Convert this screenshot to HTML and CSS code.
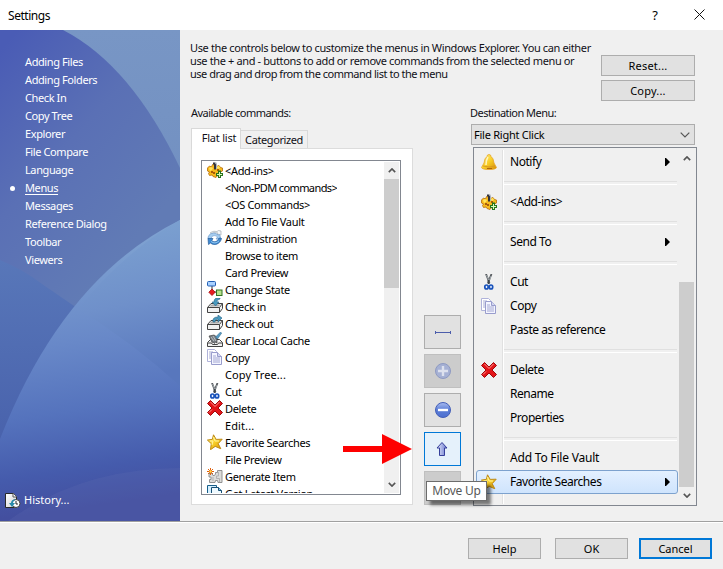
FILE: index.html
```html
<!DOCTYPE html>
<html lang="en">
<head>
<meta charset="utf-8">
<title>Settings</title>
<link rel="stylesheet" href="styles.css">
</head>
<body>
<svg class="defs" width="0" height="0">
  <defs>
    <linearGradient id="gold" x1="0" y1="0" x2="1" y2="1"><stop offset="0" stop-color="#fff18a"/><stop offset=".5" stop-color="#f8cf28"/><stop offset="1" stop-color="#d58a05"/></linearGradient>
    <linearGradient id="ball" x1="0" y1="0" x2="0" y2="1"><stop offset="0" stop-color="#a9bcf0"/><stop offset=".5" stop-color="#5b7dd6"/><stop offset="1" stop-color="#4d6fd0"/></linearGradient>
    <linearGradient id="arrow" x1="0" y1="0" x2="1" y2="0"><stop offset="0" stop-color="#e4e8fa"/><stop offset="1" stop-color="#6677cf"/></linearGradient>
    <linearGradient id="page" x1="0" y1="0" x2="1" y2="1"><stop offset="0" stop-color="#fff"/><stop offset="1" stop-color="#d2d2d2"/></linearGradient>
    <symbol id="addins" viewBox="0 0 16 16">
      <path d="M.5 6l2-2 2 1 1-2.500 3 .5 1 1.500 2.500-1 1.500 2 2 .5v3l-2 1-.5 3-3 1-1 1.500-3-1-1-1.500-2.500.5-1-2 1-1.500-2-1z" fill="#f6b91d" stroke="#b66d08" stroke-width=".8"/>
      <path d="M2 6l2-1 2 1-1 2-2 1zM9 5l3-1 1 2-2 1z" fill="#ffe55e"/>
      <path d="M4 9h2v1h2v2H6v-1H4zM10 7h2v2h-2z" fill="#a85c0a"/>
      <path d="M6 .5h2l1 2v5H7v-5H6z" fill="#33333b"/><path d="M8 0h1l1 2v5H9V2z" fill="#adb3bc"/>
      <path d="M11 8.500h3v2.500h2v3h-2v2h-3v-2H9v-3h2z" fill="#28721c"/><path d="M12 10h1v2h2v1h-2v2h-1v-2h-2v-1h2z" fill="#d8fbb9"/>
    </symbol>
    <symbol id="admin" viewBox="0 0 16 16">
      <path d="M3.500 2.500Q7 .5 10 1.500l1.500-1 2.500.5v4l-4-.5 1-1.500Q7 1.500 4 4z" fill="#f3f5f7" stroke="#a4adb5" stroke-width=".7"/>
      <path d="M1 9C.5 3 8 1.500 11 5l1.500-.5L14 9H9l1.500-2C8 4.500 4.500 5.500 4 9z" fill="#a5cdf0" stroke="#6d9bcd" stroke-width=".7"/>
      <path d="M1 8.500h5L4.800 10.500c2.500 2.500 6 1 7.200-2.500l2.500.5c-1.500 6-7.500 7.500-11 4.500l-2 1.500z" fill="#3f8ad3" stroke="#275d9b" stroke-width=".7"/>
      <path d="M4 11.500q4 3 8 -.5" fill="none" stroke="#a5d5f6" stroke-width=".8"/>
    </symbol>
    <symbol id="state" viewBox="0 0 16 16">
      <path d="M5 5v6h6" fill="none" stroke="#333"/>
      <rect x=".5" y=".5" width="8" height="4.500" rx="1" fill="#a9d1ff" stroke="#235fb4"/>
      <path d="M5 8l3.200 3.200L5 14.500l-3.200-3.300z" fill="#e51d20" stroke="#a90e10" stroke-width=".8"/>
      <rect x="9.500" y="9" width="5.500" height="5.500" fill="#b5e28b" stroke="#347425"/>
    </symbol>
    <symbol id="tray" viewBox="0 0 16 16">
      <path d="M.5 9.500L4 5.500h11.500v5l-3 4H.5z" fill="#f1f1f1" stroke="#444" stroke-width="1"/>
      <path d="M.5 9.500h12v5M12.500 9.500l3-4" fill="none" stroke="#444"/><path d="M4.500 6.500h9l-2 2h-9z" fill="#aaa"/>
    </symbol>
    <symbol id="checkin" viewBox="0 0 16 16"><use href="#tray"/>
      <path d="M13 0Q7-1 7 4H5l3.500 4L12 4h-2Q9 2 13 1z" fill="#4a9abe" stroke="#245f83" stroke-width=".6"/>
    </symbol>
    <symbol id="checkout" viewBox="0 0 16 16"><use href="#tray"/>
      <path d="M6 7Q5 2 11 2V0l4 3-4 4V4Q8 4 8 7z" fill="#4a9abe" stroke="#245f83" stroke-width=".6"/>
    </symbol>
    <symbol id="cache" viewBox="0 0 16 16"><path d="M.5 10.500l3-3h9l3 3v4H.5z" fill="#f1f1f1" stroke="#444"/>
      <path d="M1 11h3.500l1 1.500h5l1-1.500H15" fill="none" stroke="#444"/>
      <path d="M2 4l5-1 3 2v6l-1.500-1-1 1.500L6 10l-1 .5L4 8z" fill="#777d83" stroke="#333" stroke-width=".6"/><path d="M4 5l3 4M6 4l3 5" stroke="#d5d9dd" stroke-width=".7"/>
      <path d="M8.500 5l5-5 1.200 1-4.200 6z" fill="#599dc5" stroke="#286288" stroke-width=".5"/>
    </symbol>
    <symbol id="copy" viewBox="0 0 16 16">
      <path d="M.5 .5h7l2 2v10h-9z" fill="#fff" stroke="#b0b3da"/>
      <path d="M2 3h4M2 5h4M2 7h4M2 9h4" stroke="#a8acd4"/>
      <path d="M4.500 3.500h6l4 4v8h-10z" fill="#f4f5ff" stroke="#999dcd"/><path d="M10.500 3.500v4h4" fill="#d4d7f0" stroke="#999dcd"/>
      <path d="M6 7h3M6 9h7M6 11h7M6 13h7" stroke="#a4a8d3"/>
    </symbol>
    <symbol id="cut" viewBox="0 0 16 16">
      <path d="M5 0l3.500 9M10.500 0L7 9" stroke="#55595d" stroke-width="1.800"/><path d="M5.500 1l2.500 6M10 2L7.500 9" stroke="#bbc4ca" stroke-width=".7"/>
      <path d="M7.700 6v4" stroke="#3d454c" stroke-width="2"/>
      <ellipse cx="5.500" cy="13" rx="1.700" ry="2" fill="#eef4ff" stroke="#1852bb" stroke-width="1.700"/><ellipse cx="10" cy="13" rx="1.700" ry="2" fill="#eef4ff" stroke="#1852bb" stroke-width="1.700"/>
    </symbol>
    <symbol id="delete" viewBox="0 0 16 16">
      <path d="M3.500 .5L8 5l4.500-4.500 3 3L11 8l4.500 4.500-3 3L8 11l-4.500 4.500-3-3L5 8 .5 3.500z" fill="#e31519" stroke="#a0080b"/>
      <path d="M3.500 2L8 6.500 12.500 2M2 12.500l3-3" fill="none" stroke="#ff9692" stroke-width="1"/>
    </symbol>
    <symbol id="star" viewBox="0 0 16 16">
      <path d="M6.500 .8l2.700 4.600 6-.2-4 4.500 2.600 5-5.600-2.300-4.700 3.300.8-6-3.900-3.600 5-.8z" fill="url(#gold)" stroke="#bd8916"/>
      <path d="M6.500 3l1.500 4h4M3 7h3l-1 4" fill="none" stroke="#fff59e"/>
    </symbol>
    <symbol id="generate" viewBox="0 0 16 16">
      <path d="M2 5.500h3l1 2h1.500l1-1.500V4.500h2v-2H15v12h-4l-.5-2h-2l-.5 2H2.500v-3H4V9H2z" fill="#dcdcda" stroke="#888" stroke-width=".9"/>
      <path d="M11.500 4v4h-2v2.500h3V14M6 9v4" fill="none" stroke="#b1b1b1"/>
      <path d="M3.500 0v7M0 3.500h7M1 1l5 5M6 1L1 6" stroke="#e0600f" stroke-width="1"/><circle cx="3.500" cy="3.500" r="1.200" fill="#ffde4a"/>
    </symbol>
    <symbol id="latest" viewBox="0 0 16 16">
      <path d="M.5 .5h9v12h-9z" fill="#d5efff" stroke="#175e89"/><path d="M4.500 2.500h7l3 3v10h-10z" fill="#eef9ff" stroke="#164f75"/><path d="M11.500 2.500v3h3" fill="#81c5e7" stroke="#164f75"/>
    </symbol>
    <symbol id="bell" viewBox="0 0 16 16">
      <path d="M6 2.500Q6 .5 8 .5t2 2Q12.500 4 13 9l2.500 4.500Q15 15.500 8 15.500T.5 13.500L3 9Q3.500 4 6 2.500z" fill="url(#gold)" stroke="#e7a62c" stroke-width=".8"/>
      <path d="M5 11Q5 6 7 3" fill="none" stroke="#fff5bd" stroke-width="1.500"/><path d="M2 12q6 2 12 0" fill="none" stroke="#d99a22"/><path d="M6 14h5v1H6z" fill="#ad650d"/>
    </symbol>
    <symbol id="history" viewBox="0 0 16 16">
      <path d="M.5 .5h8l3 3.500v10.500H.5z" fill="url(#page)" stroke="#292929"/><path d="M8 .5V4h3.500" fill="#fff" stroke="#555"/>
      <circle cx="11" cy="10.500" r="4" fill="#fff" stroke="#444"/><path d="M11 8v3h2" fill="none" stroke="#222"/>
      <path d="M10 6Q6 7 6 10H4l3 4 3-4H8q0-2 2-3z" fill="#2a8baa"/>
    </symbol>
    <symbol id="up" viewBox="0 0 10 6"><path d="M1 5l4-4 4 4" fill="none" stroke="#555" stroke-width="2"/></symbol>
    <symbol id="down" viewBox="0 0 10 6"><path d="M1 1l4 4 4-4" fill="none" stroke="#555" stroke-width="2"/></symbol>
    <symbol id="sub" viewBox="0 0 5 8"><path d="M0 0h1l4 4-4 4H0z"/></symbol>
  </defs>
</svg>

<div class="window">
  <header class="titlebar">
    <span class="title">Settings</span>
    <span class="help-mark">?</span>
    <svg class="close" viewBox="0 0 11 11"><path d="M.5 .5l10 10M10.500 .5l-10 10" stroke="#111" fill="none"/></svg>
  </header>

  <main class="body">
    <nav class="sidebar">
      <svg class="backdrop" viewBox="0 0 180 491" preserveAspectRatio="none">
        <defs>
          <linearGradient id="s1" x1="0" y1="0" x2="0" y2="1"><stop offset="0" stop-color="#7896c5"/><stop offset="1" stop-color="#6684b9"/></linearGradient>
          <linearGradient id="s2" gradientUnits="userSpaceOnUse" x1="0" y1="20" x2="170" y2="170"><stop offset="0" stop-color="#4a5cb5"/><stop offset=".5" stop-color="#5a70b5"/><stop offset="1" stop-color="#617bb5"/></linearGradient>
          <linearGradient id="s3" gradientUnits="userSpaceOnUse" x1="0" y1="230" x2="0" y2="410"><stop offset="0" stop-color="#5877b9"/><stop offset="1" stop-color="#4962ac"/></linearGradient>
          <linearGradient id="s4" gradientUnits="userSpaceOnUse" x1="100" y1="220" x2="135" y2="470"><stop offset="0" stop-color="#7da0d0"/><stop offset=".35" stop-color="#6888c8"/><stop offset=".62" stop-color="#5573bd"/><stop offset=".85" stop-color="#455bac"/><stop offset="1" stop-color="#434f9f"/></linearGradient>
          <linearGradient id="s5" gradientUnits="userSpaceOnUse" x1="120" y1="200" x2="150" y2="345"><stop offset="0" stop-color="#7ba0d0"/><stop offset=".5" stop-color="#6f90ca"/><stop offset="1" stop-color="#5877bd"/></linearGradient>
        </defs>
        <rect width="180" height="491" fill="url(#s1)"/>
        <path d="M0 0H63Q131 35 180 138V491H0z" fill="url(#s2)"/>
        <path d="M0 230Q24 240 42 254L80 280V491H0z" fill="url(#s3)"/>
        <path d="M180 190Q63 248 0 409V491H180z" fill="url(#s4)"/>
        <path d="M180 190Q124 222 78 279Q132 312 180 356z" fill="url(#s5)"/>
        <path d="M8 491Q82 438 180 438V491z" fill="#6977b9" opacity=".18"/>
      </svg>
      <ul class="nav">
        <li>Adding Files</li><li>Adding Folders</li><li>Check In</li><li>Copy Tree</li><li>Explorer</li><li>File Compare</li><li>Language</li><li class="current"><span>Menus</span></li><li>Messages</li><li>Reference Dialog</li><li>Toolbar</li><li>Viewers</li>
      </ul>
      <div class="history"><svg class="icon"><use href="#history"/></svg><span>History...</span></div>
    </nav>

    <section class="content">
      <div class="intro">
        <p>Use the controls below to customize the menus in Windows Explorer. You can either<br><span class="l2">use the + and - buttons to add or remove commands from the selected menu or</span><br><span class="l3">use drag and drop from the command list to the menu</span></p>
        <div class="intro-buttons"><button>Reset...</button><button>Copy...</button></div>
      </div>

      <div class="columns">
        <div class="available">
          <div class="label">Available commands:</div>
          <div class="tabs"><div class="tab active">Flat list</div><div class="tab">Categorized</div></div>
          <div class="panel">
            <div class="listbox">
              <ul class="commands">
                <li><svg class="icon"><use href="#addins"/></svg><span class="b">&lt;Add-ins&gt;</span></li>
                <li><i class="icon"></i><span class="b wide">&lt;Non-PDM commands&gt;</span></li>
                <li><i class="icon"></i><span class="b">&lt;OS Commands&gt;</span></li>
                <li><i class="icon"></i>Add To File Vault</li>
                <li><svg class="icon"><use href="#admin"/></svg>Administration</li>
                <li><i class="icon"></i>Browse to item</li>
                <li><i class="icon"></i>Card Preview</li>
                <li><svg class="icon"><use href="#state"/></svg>Change State</li>
                <li><svg class="icon"><use href="#checkin"/></svg>Check in</li>
                <li><svg class="icon"><use href="#checkout"/></svg>Check out</li>
                <li><svg class="icon"><use href="#cache"/></svg>Clear Local Cache</li>
                <li><svg class="icon"><use href="#copy"/></svg>Copy</li>
                <li><i class="icon"></i><span class="dots">Copy Tree...</span></li>
                <li><svg class="icon"><use href="#cut"/></svg>Cut</li>
                <li><svg class="icon"><use href="#delete"/></svg>Delete</li>
                <li><i class="icon"></i><span class="dots">Edit...</span></li>
                <li><svg class="icon"><use href="#star"/></svg>Favorite Searches</li>
                <li><i class="icon"></i>File Preview</li>
                <li><svg class="icon"><use href="#generate"/></svg>Generate Item</li>
                <li><svg class="icon"><use href="#latest"/></svg>Get Latest Version</li>
              </ul>
              <div class="scroll"><svg class="chev"><use href="#up"/></svg><div class="thumb"></div><svg class="chev"><use href="#down"/></svg></div>
            </div>
          </div>
        </div>

        <div class="tools">
          <div class="tool"><svg width="18" height="18" viewBox="0 0 18 18"><path d="M2 9.500h14" stroke="#4c5dab"/><path d="M1 8h1v1h1v1H2v1H1zM17 8h-1v1h-1v1h1v1h1z" fill="#4c5dab"/></svg></div>
          <div class="tool disabled"><svg width="18" height="18" viewBox="0 0 18 18"><circle cx="9" cy="9" r="7.500" fill="#a6b1d4" stroke="#8e9ac2"/><path d="M9 4v10M4 9h10" stroke="#dde1ee" stroke-width="2.400"/></svg></div>
          <div class="tool"><svg width="18" height="18" viewBox="0 0 18 18"><circle cx="9" cy="9" r="7.500" fill="url(#ball)" stroke="#445fb8"/><path d="M4 9h10" stroke="#fff" stroke-width="2.400"/></svg></div>
          <div class="tool hot"><svg width="18" height="18" viewBox="0 0 18 18"><path d="M8 2.500l5 5.500h-2.500v7.500h-5V8H3z" fill="url(#arrow)" stroke="#353f9a"/></svg></div>
          <div class="tool disabled"></div>
          <div class="tooltip">Move Up</div>
        </div>

        <div class="destination">
          <div class="label">Destination Menu:</div>
          <div class="combo"><span>File Right Click</span><svg viewBox="0 0 10 6"><path d="M.7 .7L5 5 9.300 .7" fill="none" stroke="#555" stroke-width="1.200"/></svg></div>
          <div class="menubox">
            <ul class="menu">
              <li><svg class="icon"><use href="#bell"/></svg><span>Notify</span><svg class="sub"><use href="#sub"/></svg></li>
              <li class="sep"></li>
              <li><svg class="icon"><use href="#addins"/></svg><span>&lt;Add-ins&gt;</span></li>
              <li class="sep"></li>
              <li><i class="icon"></i><span>Send To</span><svg class="sub"><use href="#sub"/></svg></li>
              <li class="sep"></li>
              <li><svg class="icon"><use href="#cut"/></svg><span>Cut</span></li>
              <li><svg class="icon"><use href="#copy"/></svg><span>Copy</span></li>
              <li><i class="icon"></i><span>Paste as reference</span></li>
              <li class="sep"></li>
              <li><svg class="icon"><use href="#delete"/></svg><span>Delete</span></li>
              <li><i class="icon"></i><span>Rename</span></li>
              <li><i class="icon"></i><span>Properties</span></li>
              <li class="sep"></li>
              <li><i class="icon"></i><span class="vault">Add To File Vault</span></li>
              <li class="selected"><svg class="icon"><use href="#star"/></svg><span>Favorite Searches</span><svg class="sub"><use href="#sub"/></svg></li>
            </ul>
            <div class="scroll"><svg class="chev"><use href="#up"/></svg><div class="thumb low"></div><svg class="chev"><use href="#down"/></svg></div>
          </div>
        </div>
      </div>
      <svg class="pointer" viewBox="0 0 69 30"><path d="M0 12h39V0l30 15-30 15V18H0z" fill="#fe0000"/></svg>
    </section>
  </main>

  <footer class="footer"><button>Help</button><button>OK</button><button class="default">Cancel</button></footer>
</div>
</body>
</html>
```
FILE: styles.css
```css
* { box-sizing: border-box; }
body { margin: 0; font-family: "Noto Sans", sans-serif; font-size: 11px; color: #101018; }
ul { list-style: none; margin: 0; padding: 0; }
p { margin: 0; }
.defs { position: absolute; }
.window { width: 723px; height: 569px; background: #f0f0f0; display: flex; flex-direction: column; overflow: hidden; }
.titlebar { height: 30px; flex: none; background: #fff; display: flex; align-items: center; padding: 0 18px 0 8px; color: #000; }
.title { flex: 1; font-size: 12px; letter-spacing: -0.45px; }
.help-mark { font-size: 13px; margin-right: 36px; }
.close { width: 11px; height: 11px; margin-top: -2px; }
.body { display: flex; height: 491px; flex: none; }
.icon { width: 16px; height: 16px; flex: none; display: block; }

.sidebar { width: 180px; position: relative; flex: none; overflow: hidden; color: #fff; }
.backdrop { position: absolute; inset: 0; width: 180px; height: 491px; }
.nav { position: relative; padding: 23px 0 0 25px; height: 462px; letter-spacing: -0.4px; }
.nav li { height: 18px; line-height: 18px; white-space: nowrap; }
.current { position: relative; }
.current span { text-decoration: underline; text-underline-offset: 2px; }
.current::before { content: ""; position: absolute; left: -15px; top: 7px; width: 5px; height: 5px; border-radius: 50%; background: #fff; }
.history { position: relative; display: flex; align-items: center; gap: 3px; height: 17px; padding-left: 5px; }
.history span { margin-top: -2px; }

.content { position: relative; width: 543px; padding: 11px 26px 0 10px; }
.intro { display: flex; justify-content: space-between; height: 62px; padding-right: 2px; }
.intro p { width: 403px; line-height: 13px; white-space: nowrap; letter-spacing: -0.37px; }
.intro .l3 { letter-spacing: -0.48px; }
.intro-buttons { display: flex; flex-direction: column; gap: 4px; padding-top: 14px; }
button { font: inherit; color: #000; width: 94px; height: 21px; padding: 0; border: 1px solid #adadad; background: #e1e1e1; line-height: 19px; }
.intro-buttons button { letter-spacing: 0.2px; }
.columns { display: flex; }
.label { height: 18px; line-height: 18px; padding-left: 1px; white-space: nowrap; letter-spacing: -0.53px; }
.available { width: 223px; padding-top: 1px; }
.tabs { display: flex; align-items: flex-end; height: 20px; margin: 6px 0 0 1px; }
.tab { border: 1px solid #d9d9d9; border-bottom: 0; height: 18px; line-height: 18px; width: 67px; text-align: center; white-space: nowrap; letter-spacing: -0.4px; }
.tab.active { height: 21px; width: 50px; background: #fff; position: relative; margin-bottom: -1px; padding-left: 6px; letter-spacing: -0.2px; }
.tab + .tab { border-left: 0; }
.panel { margin-left: 1px; width: 222px; height: 357px; border: 1px solid #dcdcdc; background: #fff; padding: 11px 0 0 9px; }
.listbox { width: 200px; height: 335px; border: 1px solid #828790; background: #fff; display: flex; justify-content: space-between; padding: 1px; overflow: hidden; }
.commands { padding-left: 4px; height: 331px; overflow: hidden; letter-spacing: -0.33px; }
.commands li { height: 17px; line-height: 17px; display: flex; gap: 2px; white-space: nowrap; color: #000; }
.wide { letter-spacing: -0.6px; }
.dots { letter-spacing: 0.1px; }
.scroll { width: 15px; height: 100%; flex: none; background: #f0f0f0; display: flex; flex-direction: column; align-items: center; }
.chev { width: 8px; height: 5px; margin: 6px 0; flex: none; }
.thumb { width: 15px; height: 109px; background: #cdcdcd; margin-bottom: auto; }
.thumb.low { height: 205px; margin: auto 0 0; }

.tools { width: 37px; margin: 212px 0 0 11px; position: relative; display: flex; flex-direction: column; gap: 5px; }
.tool { width: 37px; height: 34px; border: 1px solid #adadad; background: #e1e1e1; display: flex; align-items: center; justify-content: center; }
.tool.disabled { background: #ccc; border-color: #bfbfbf; }
.tool.hot { background: #e5f1fb; border-color: #0078d7; }
.tooltip { position: absolute; z-index: 3; left: 2px; top: 166px; width: 61px; height: 20px; line-height: 18px; border: 1px solid #6c6c6c; background: #fff; color: #575757; text-align: center; font-size: 12px; letter-spacing: -0.25px; white-space: nowrap; box-shadow: 4px 4px 3px rgba(0,0,0,.5); }

.destination { width: 226px; margin-left: 9px; padding-top: 1px; }
.destination .label { padding-left: 0; }
.combo { display: flex; justify-content: space-between; align-items: center; margin: 2px 0 0 1px; width: 224px; height: 21px; border: 1px solid #adadad; background: #e1e1e1; padding: 0 4px 0 2px; color: #000; letter-spacing: -0.25px; }
.combo svg { width: 10px; height: 6px; }
.menubox { margin: 2px 0 0 3px; width: 224px; height: 359px; border: 1px solid #828790; padding: 2px 1px 1px 2px; display: flex; background: #f0f0f0; }
.menu { width: 202px; margin-right: 1px; font-size: 12px; letter-spacing: -0.45px; color: #000; background: linear-gradient(90deg, transparent 26px, #e1e1e1 26px, #e1e1e1 27px, #fff 27px, #fff 28px, transparent 28px); }
.menu li { height: 24px; display: flex; align-items: center; padding: 0 8px 0 5px; white-space: nowrap; }
.menu li span { flex: 1; padding-left: 13px; margin-top: -1px; }
.menu .vault { letter-spacing: -0.2px; }
.menu .sep { height: 16px; padding: 1px 0 0; }
.menu .sep::after { content: ""; margin-left: 28px; width: 173px; height: 2px; border-top: 1px solid #e0e0e0; border-bottom: 1px solid #fff; }
.menu li.selected { border: 1px solid #7da2ce; border-radius: 3px; background: linear-gradient(#e3f0ff, #cfe4fd); padding: 0 7px 0 4px; }
.sub { width: 5px; height: 8px; }
.pointer { position: absolute; left: 163px; top: 404px; width: 69px; height: 30px; }

.footer { flex: 1; border-top: 1px solid #a0a0a0; box-shadow: inset 0 1px #fff; display: flex; justify-content: flex-end; padding: 16px 11px 0 0; }
.footer button { width: 73px; margin-left: 14px; }
.footer button.default { border: 2px solid #0078d7; margin-left: 11px; line-height: 17px; }
```
